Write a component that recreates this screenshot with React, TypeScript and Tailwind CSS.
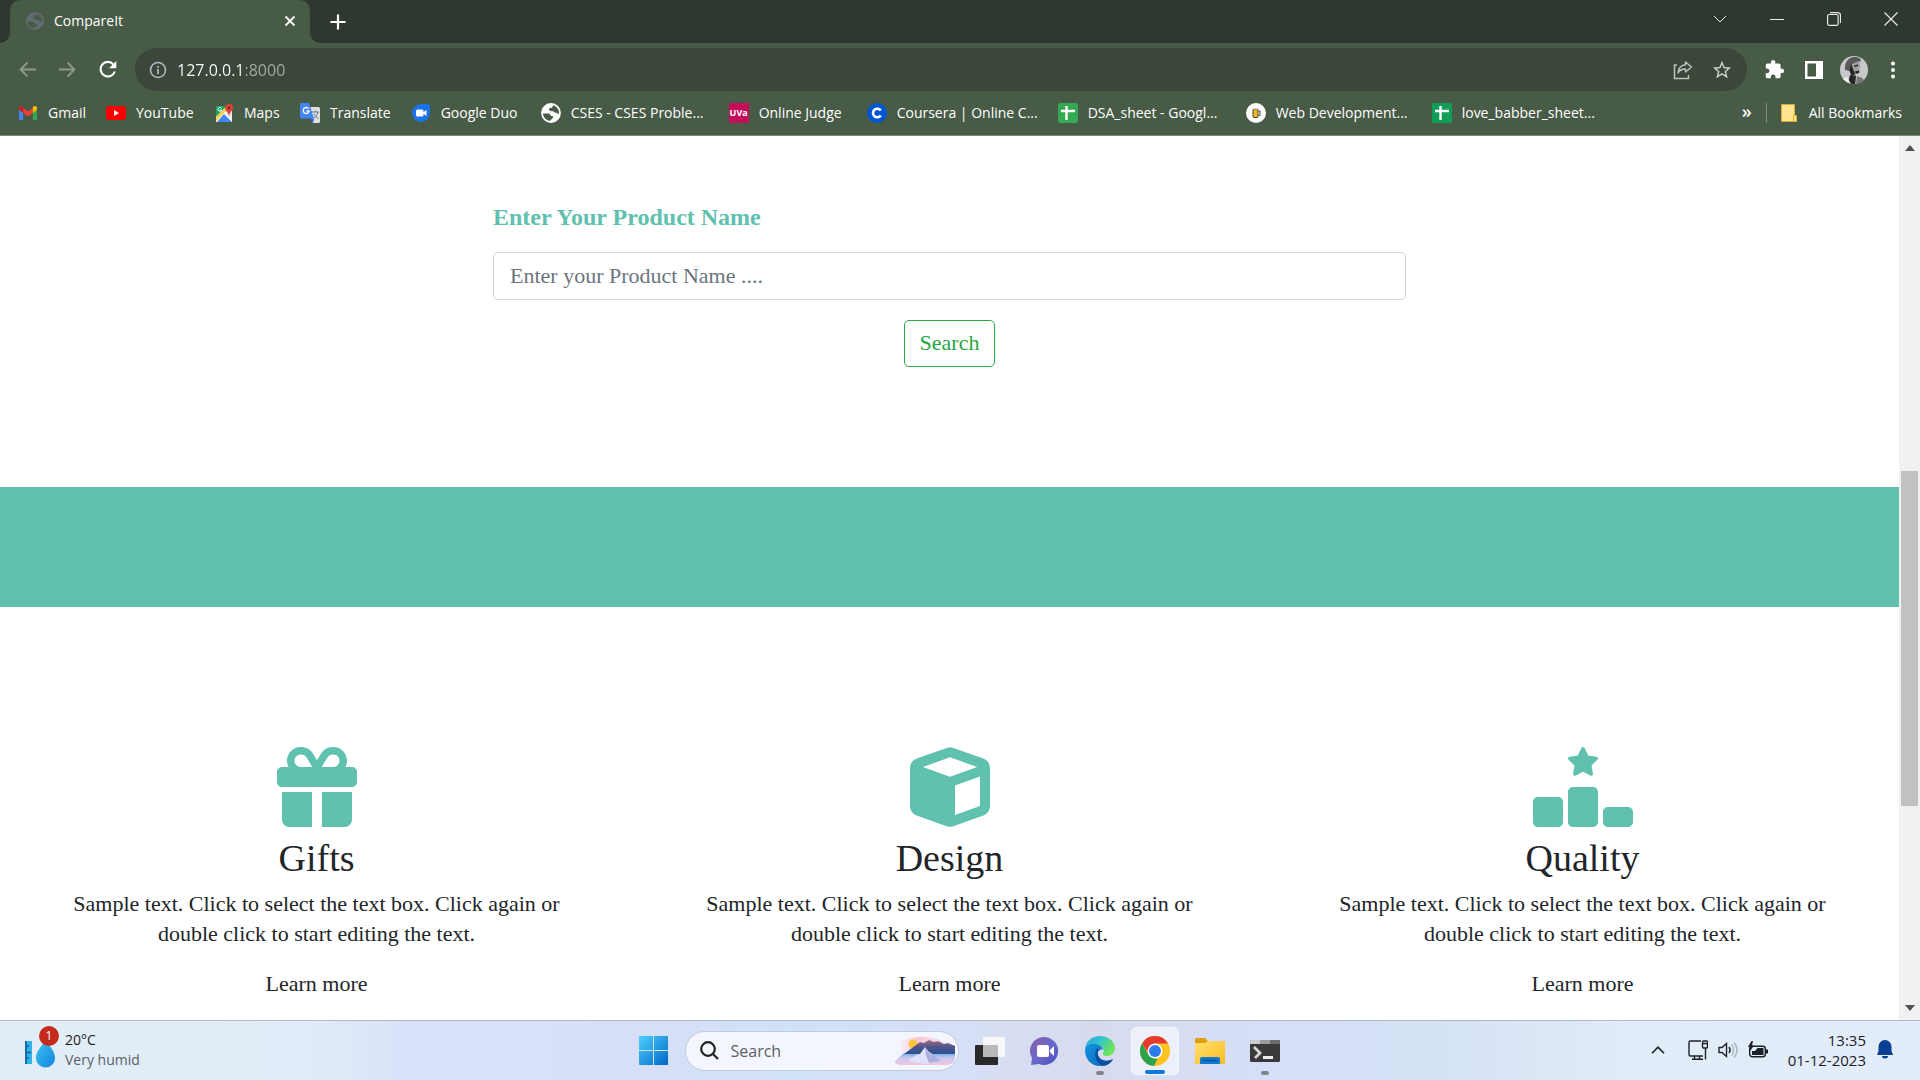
import type { ReactNode } from "react";
import { FaCube, FaGift, FaRankingStar } from "react-icons/fa6";
import { MdExtension, MdStarBorder } from "react-icons/md";

const GlobeIcon = ({ className }: { className: string }) => (
  <svg viewBox="0 0 20 20" className={className}>
    <circle cx="10" cy="10" r="9" fill="none" stroke="currentColor" strokeWidth="1.8" />
    <path fill="currentColor" d="M13 1.500C6 0 1 5 1.500 10.500h6c2 0 1.500 2.500 3.500 2.500 1.500 0 1.500 1.800.3 2.500L8 18.800c5 .9 10.500-2 11-8.300-1.500.5-3 .3-3.500-1-1 .5-2 .3-2.500-.8-1-.9-3-.2-4.500-1.200-1.200-1.500 0-2.500 1.500-2.700 2-.3 1-1.300 3-3.300z" />
  </svg>
);

const SheetsIcon = ({ className }: { className: string }) => (
  <svg viewBox="0 0 20 20" className={className}>
    <rect width="20" height="20" rx="2" fill="currentColor" />
    <path d="M8.500 3v14M3 8h14" stroke="#fff" strokeWidth="2.400" />
  </svg>
);

const GmailIcon = () => (
  <svg viewBox="0 0 20 20" className="size-5">
    <path fill="#4285f4" d="M1 6.500l4.200 3V17H2.200A1.200 1.200 0 0 1 1 15.800z" />
    <path fill="#34a853" d="M19 6.500l-4.200 3V17h3a1.200 1.200 0 0 0 1.200-1.200z" />
    <path fill="#ea4335" d="M5.200 5L10 8.600 14.800 5v5L10 13.600 5.200 10z" />
    <path fill="#c5221f" d="M1 5c0-2 2-2.600 3.400-1.600l.8.600v6L1 6.800z" />
    <path fill="#fbbc04" d="M19 5c0-2-2-2.600-3.400-1.600l-.8.600v6L19 6.800z" />
  </svg>
);

const YouTubeIcon = () => (
  <svg viewBox="0 0 20 20" className="size-5">
    <rect y="3" width="20" height="14" rx="3.500" fill="#f00" />
    <path fill="#fff" d="M8 7l5 3-5 3z" />
  </svg>
);

const MapsIcon = () => (
  <svg viewBox="0 0 20 20" className="size-5">
    <path fill="#1fa463" d="M2 3h12L2 17z" />
    <path fill="#fff" d="M2 14L13 3l5 4v12H2z" />
    <path fill="#ffd04b" d="M2 14L12 4l2 2L2 18.500z" />
    <path fill="#4285f4" d="M10 11l8 8H3z" />
    <path fill="#e8eaed" d="M11 10l7-1v8z" />
    <path d="M7.500 5.300a1.900 1.900 0 1 0 .2 1.700H6" fill="none" stroke="#fff" />
    <path fill="#db4437" d="M15 1a4 4 0 0 0-4 4c0 3 3.500 4 4 8.500C15.500 9 19 8 19 5a4 4 0 0 0-4-4z" />
    <circle cx="15" cy="5" r="1.400" fill="#7b2a22" />
  </svg>
);

const TranslateIcon = () => (
  <svg viewBox="0 0 20 20" className="size-5">
    <path fill="#e0e0e0" d="M8 4h10.500A1.500 1.500 0 0 1 20 5.500V18.500a1.500 1.500 0 0 1-1.500 1.500H13z" />
    <path d="M12 9h7M15.500 7.500V9M18 9c-.5 3-2.500 5-4.500 6M14 11c1 2 2.500 3.500 4.500 4.500" stroke="#607d8b" fill="none" />
    <path fill="#4285f4" d="M1.500 0H9l5 15.500H1.500A1.500 1.500 0 0 1 0 14V1.500A1.500 1.500 0 0 1 1.500 0z" />
    <path fill="#3367d6" d="M9.500 15.500H14L13 20z" />
    <path d="M8.500 5.500a3 3 0 1 0 .7 2.500H6.500" fill="none" stroke="#fff" strokeWidth="1.300" />
  </svg>
);

const DuoIcon = () => (
  <svg viewBox="0 0 20 20" className="size-5">
    <path fill="#1a73e8" d="M10 1h7a2 2 0 0 1 2 2v7a9 9 0 1 1-9-9z" />
    <rect x="5" y="6.500" width="7.500" height="7" rx="1.500" fill="#fff" />
    <path fill="#fff" d="M12 9.500l3.500-2.500v6L12 10.500z" />
  </svg>
);

const UvaIcon = () => (
  <span className="flex size-5 items-center justify-center bg-[#c40d5b] text-[9px] font-bold">UVa</span>
);

const CourseraIcon = () => (
  <svg viewBox="0 0 20 20" className="size-5">
    <circle cx="10" cy="10" r="10" fill="#0056d2" />
    <path d="M13.800 7.500a4.300 4.300 0 1 0 0 5" stroke="#fff" strokeWidth="2.600" fill="none" />
  </svg>
);

const MugIcon = () => (
  <svg viewBox="0 0 20 20" className="size-5">
    <circle cx="10" cy="10" r="10" fill="#fff" />
    <rect x="7" y="6" width="5" height="8.500" rx="1" fill="#f0b81a" stroke="#444" />
    <path d="M12.500 8h1.500v4.500h-1.500" fill="none" stroke="#444" />
    <path d="M6.500 5.500h6" stroke="#ddd" strokeWidth="1.500" />
  </svg>
);

const bookmarks: { label: string; width: string; icon: ReactNode }[] = [
  { label: "Gmail", width: "min-w-[67px]", icon: <GmailIcon /> },
  { label: "YouTube", width: "min-w-[88px]", icon: <YouTubeIcon /> },
  { label: "Maps", width: "min-w-[66px]", icon: <MapsIcon /> },
  { label: "Translate", width: "min-w-[88px]", icon: <TranslateIcon /> },
  { label: "Google Duo", width: "min-w-[110px]", icon: <DuoIcon /> },
  { label: "CSES - CSES Proble...", width: "min-w-[168px]", icon: <GlobeIcon className="size-5 text-white" /> },
  { label: "Online Judge", width: "min-w-[118px]", icon: <UvaIcon /> },
  { label: "Coursera | Online C...", width: "min-w-[168px]", icon: <CourseraIcon /> },
  { label: "DSA_sheet - Googl...", width: "min-w-[168px]", icon: <SheetsIcon className="size-5 text-[#34a853]" /> },
  { label: "Web Development...", width: "min-w-[166px]", icon: <MugIcon /> },
  { label: "love_babber_sheet...", width: "min-w-[166px]", icon: <SheetsIcon className="size-5 text-[#0f9d58]" /> },
];

function TabStrip() {
  return (
    <div className="flex h-[43px] items-stretch bg-[#2f382e] pl-2.5">
      <div className="relative flex w-[300px] items-center rounded-t-[10px] bg-[#485b46] pr-3.5 pb-0.5 pl-4">
        <svg viewBox="0 0 10 10" className="absolute bottom-0 -left-2.5 size-2.5 text-[#485b46]">
          <path fill="currentColor" d="M10 0v10H0A10 10 0 0 0 10 0z" />
        </svg>
        <svg viewBox="0 0 10 10" className="absolute -right-2.5 bottom-0 size-2.5 text-[#485b46]">
          <path fill="currentColor" d="M0 0v10h10A10 10 0 0 1 0 0z" />
        </svg>
        <GlobeIcon className="size-[18px] text-[#636a70]" />
        <span className="ml-2.5 grow text-sm text-white">CompareIt</span>
        <button aria-label="Close tab" className="text-white">
          <svg viewBox="0 0 12 12" className="size-3" stroke="currentColor" strokeWidth="1.800"><path d="M1.500 1.500l9 9M10.500 1.500l-9 9" /></svg>
        </button>
      </div>
      <button aria-label="New tab" className="ml-5 text-white">
        <svg viewBox="0 0 16 16" className="size-4" stroke="currentColor" strokeWidth="2.200"><path d="M8 .5v15M.5 8h15" /></svg>
      </button>
      <div className="ml-auto flex items-center pb-1.5 text-[#e8ebe7]">
        <button aria-label="Search tabs" className="flex w-14 justify-center">
          <svg viewBox="0 0 14 14" className="size-3.5" fill="none" stroke="currentColor"><path d="M1 4l6 6 6-6" /></svg>
        </button>
        <button aria-label="Minimize" className="flex w-[57px] justify-center">
          <svg viewBox="0 0 14 14" className="size-3.5" stroke="currentColor"><path d="M0 7.500h14" /></svg>
        </button>
        <button aria-label="Restore" className="flex w-[57px] justify-center">
          <svg viewBox="0 0 14 14" className="size-3.5" fill="none" stroke="currentColor" strokeWidth="1.200"><rect x=".6" y="2.500" width="10.500" height="10.800" rx="1.500" /><path d="M3 .6h7.500a3 3 0 0 1 3 3V11" /></svg>
        </button>
        <button aria-label="Close" className="flex w-[58px] justify-center">
          <svg viewBox="0 0 14 14" className="size-3.5" stroke="currentColor" strokeWidth="1.200"><path d="M.5.5l13 13M13.500.5l-13 13" /></svg>
        </button>
      </div>
    </div>
  );
}

function Toolbar() {
  return (
    <div className="flex items-center bg-[#485b46] pt-[5px] pr-6 pl-[18px]">
      <button aria-label="Back" className="text-[#8d998c]">
        <svg viewBox="0 0 20 20" className="size-5" fill="none" stroke="currentColor" strokeWidth="1.800"><path d="M18 9.500H3M9.500 2.500l-7 7 7 7" /></svg>
      </button>
      <button aria-label="Forward" className="ml-5 text-[#8d998c]">
        <svg viewBox="0 0 20 20" className="size-5" fill="none" stroke="currentColor" strokeWidth="1.800"><path d="M1 9.500h15M9.500 2.500l7 7-7 7" /></svg>
      </button>
      <button aria-label="Reload" className="ml-5 text-white">
        <svg viewBox="0 0 20 20" className="size-5" fill="none" stroke="currentColor" strokeWidth="2.100"><path d="M15.500 4.500A7.300 7.300 0 1 0 16.800 11.500" /><path d="M18.300 1v7.200H11z" fill="currentColor" stroke="none" /></svg>
      </button>
      <div className="ml-[17px] flex h-[43px] grow items-center rounded-full bg-[#3b473a] px-3.5">
        <svg viewBox="0 0 18 18" className="size-[18px] text-[#b3b9bd]" fill="none" stroke="currentColor" strokeWidth="1.600"><circle cx="9" cy="9" r="7.500" /><path d="M9 8v5M9 5v1.800" strokeWidth="1.800" /></svg>
        <input
          aria-label="Address"
          type="text"
          defaultValue="127.0.0.1:8000"
          className="ml-2.5 grow bg-[linear-gradient(90deg,#fff_68px,#a5ada4_68px)] bg-clip-text text-base text-transparent caret-white outline-none"
        />
        <button aria-label="Share" className="text-[#bcc2bb]">
          <svg viewBox="0 0 20 20" className="size-5" fill="none" stroke="currentColor" strokeWidth="1.500"><path d="M4 5H1.500v13.500h14V15" /><path d="M12.500 2l6 5-6 5V9C9 9 6.500 10 5 13c.3-5 3.500-8 7.500-8.300z" strokeLinejoin="round" /></svg>
        </button>
        <button aria-label="Bookmark this tab" className="ml-[18px] text-[#cdd1cc]"><MdStarBorder className="size-[22px]" /></button>
      </div>
      <button aria-label="Extensions" className="ml-[17px] text-white"><MdExtension className="size-[21px]" /></button>
      <button aria-label="Side panel" className="ml-5 text-white">
        <svg viewBox="0 0 18 18" className="size-[18px]"><path fill="currentColor" fillRule="evenodd" d="M0 0h18v18H0zM2.500 2.500v13H11v-13z" /></svg>
      </button>
      <button aria-label="Profile" className="ml-[17px]">
        <svg viewBox="0 0 28 28" className="size-7 rounded-full">
          <rect width="28" height="28" fill="#c9c9cb" />
          <path fill="#59595a" d="M5 14C4 6 9 0 16 1c3 .3 5 2 5 4l-8 3-3 7z" />
          <path fill="#a0a0a0" d="M12 8l7-3 1.500 6.500-1.500 1 .5 3-3.500 2v9l-6-1 1-8z" />
          <path fill="#262627" d="M14 9.500l4-1v1.500l-3.500 1zM11 8l2.500 6 2 4-4 2-2-5zM15 15.500l4-1 .5 2-3 1.500zM10 19l6 1-1 8H8z" />
          <path fill="#eee" d="M0 24l7-3 4 7H2z" /><path fill="#777" d="M17 20l5 2 3 3-6 3h-3z" />
        </svg>
      </button>
      <button aria-label="Menu" className="ml-[22px] text-white">
        <svg viewBox="0 0 6 18" className="h-[18px] w-1.5" fill="currentColor"><circle cx="3" cy="2.500" r="2" /><circle cx="3" cy="9" r="2" /><circle cx="3" cy="15.500" r="2" /></svg>
      </button>
    </div>
  );
}

function BookmarksBar() {
  return (
    <nav aria-label="Bookmarks" className="flex h-[45px] items-center border-b border-[#7d897c] bg-[#485b46] px-[18px] text-sm whitespace-nowrap text-white">
      <div className="flex grow items-center gap-5">
        {bookmarks.map((b) => (
          <a key={b.label} href="#" className={`flex items-center gap-2.5 ${b.width}`}>
            {b.icon}
            {b.label}
          </a>
        ))}
      </div>
      <button aria-label="More bookmarks" className="pb-1 text-lg font-semibold">»</button>
      <span className="mx-3.5 h-5 w-px bg-[#7d897c]" />
      <a href="#" className="flex items-center gap-3">
        <svg viewBox="0 0 16 18" className="h-[18px] w-4"><path fill="#ffe38f" stroke="#dcae30" d="M.5.5h13v11h2v6H.5z" /><path d="M12.500 17.500v-6h2" stroke="#dcae30" fill="none" /></svg>
        All Bookmarks
      </a>
    </nav>
  );
}

function SearchForm() {
  return (
    <form className="mx-auto w-[913px] max-w-full pt-[66px] text-[22px]/[30px]" onSubmit={(e) => e.preventDefault()}>
      <label htmlFor="product" className="block text-2xl/[30px] font-bold text-[#60c1af]">Enter Your Product Name</label>
      <input
        id="product"
        type="text"
        placeholder="Enter your Product Name ...."
        className="mt-5 block h-12 w-full rounded-[5px] border border-[#ced4da] px-4 placeholder:text-[#6c757d] placeholder:opacity-100"
      />
      <button className="mx-auto mt-5 block h-[47px] rounded-[5px] border border-[#28a745] px-[15px] pb-0.5 text-[#28a745]">Search</button>
    </form>
  );
}

const features = [
  { title: "Gifts", icon: <FaGift className="size-20" /> },
  { title: "Design", icon: <FaCube className="size-20" /> },
  { title: "Quality", icon: <FaRankingStar className="h-20 w-[100px]" /> },
];

function Features() {
  return (
    <section className="grid grid-cols-3 pt-[140px]">
      {features.map((f) => (
        <article key={f.title} className="flex flex-col items-center px-[70px] text-center text-[22px]/[30px] text-[#212529]">
          <div className="text-[#60c1af]">{f.icon}</div>
          <h3 className="mt-2.5 text-[38px]/[42px]">{f.title}</h3>
          <p className="mt-2.5">Sample text. Click to select the text box. Click again or double click to start editing the text.</p>
          <a href="#" className="mt-5">Learn more</a>
        </article>
      ))}
    </section>
  );
}

function Scrollbar() {
  return (
    <div className="flex w-[21px] shrink-0 flex-col items-center bg-[#f1f1f1]">
      <svg viewBox="0 0 10 6" className="mt-[9px] h-1.5 w-2.5"><path fill="#505050" d="M5 0l5 6H0z" /></svg>
      <div className="h-80" />
      <div className="h-[335px] w-[17px] bg-[#c1c1c1]" />
      <svg viewBox="0 0 10 6" className="mt-auto mb-[9px] h-1.5 w-2.5"><path fill="#505050" d="M0 0h10L5 6z" /></svg>
    </div>
  );
}

function TaskButton({ label, active, mark, children }: { label: string; active?: boolean; mark?: boolean; children: ReactNode }) {
  return (
    <button
      aria-label={label}
      className={active ? "relative flex size-12 items-center justify-center rounded-md border border-white/60 bg-[#ecf0fa]" : "relative flex size-12 items-center justify-center"}
    >
      {children}
      {active && <span className="absolute bottom-0 h-1 w-5 rounded-full bg-[#0a7bdc]" />}
      {mark && <span className="absolute bottom-0 h-1 w-2 rounded-full bg-[#81858f]" />}
    </button>
  );
}

function Taskbar() {
  return (
    <footer className="flex h-[60px] items-center border-t border-[#b0b9c4] bg-[linear-gradient(90deg,#e1edf7_0%,#e1ecf8_16%,#d8e3fa_21%,#d6dff6_34%,#d0e2f8_41%,#d6dff6_50%,#d8dbee_57%,#d5dff7_66%,#d5e2f5_75%,#e0ecf8_85%,#e2edf9_100%)]">
      <div className="flex flex-1 items-center pb-0.5 pl-[25px]">
        <button aria-label="Weather" className="relative flex items-center gap-2 text-left">
          <svg viewBox="0 0 32 38" className="h-[38px] w-8">
            <defs>
              <linearGradient id="drop" x1="0" y1="0" x2="1" y2="1"><stop stopColor="#3cc5f1" /><stop offset="1" stopColor="#1483dc" /></linearGradient>
            </defs>
            <rect y="10" width="7" height="23" fill="#31b4ea" />
            <path d="M1 10v23M1 15h3M1 21.500h5M1 27h3" stroke="#135d9c" strokeWidth="1.600" />
            <path fill="url(#drop)" d="M20.500 9c3 5 9.500 11 9.500 18a9.500 9.500 0 0 1-19 0c0-7 6-12 9.500-18z" />
          </svg>
          <span className="absolute -top-1 left-3.5 flex size-5 items-center justify-center rounded-full bg-[#c42b1c] text-xs text-white">1</span>
          <span className="text-sm/5 text-[#1b1e22]">20°C<br /><span className="text-[#5b6168]">Very humid</span></span>
        </button>
      </div>

      <div className="flex items-center gap-[7px]">
        <TaskButton label="Start">
          <svg viewBox="0 0 29 29" className="size-[29px]">
            <defs><linearGradient id="win" x1="0" y1="0" x2="1" y2="1"><stop stopColor="#4cd0fc" /><stop offset="1" stopColor="#0067c8" /></linearGradient></defs>
            <path fill="url(#win)" d="M1 0h13v14H0V1a1 1 0 0 1 1-1zM15 0h13a1 1 0 0 1 1 1v13H15zM0 15h14v14H1a1 1 0 0 1-1-1zM15 15h14v13a1 1 0 0 1-1 1H15z" />
          </svg>
        </TaskButton>
        <label className="relative flex h-10 w-[274px] items-center overflow-hidden rounded-full border border-[#c3cbdc] bg-[#f3f6fd] pl-3.5">
          <svg viewBox="0 0 19 19" className="size-[19px] shrink-0 text-[#222]" fill="none" stroke="currentColor" strokeWidth="2.200"><circle cx="8" cy="8" r="6.800" /><path d="M13 13l5 5" /></svg>
          <input aria-label="Search Windows" type="text" placeholder="Search" className="ml-3 w-24 grow bg-transparent text-base placeholder:text-[#5b6068] placeholder:opacity-100" />
          <svg viewBox="0 0 62 32" className="mr-0.5 h-8 w-[62px] shrink-0">
            <defs>
              <linearGradient id="sky" x1="0" y1="0" x2="1" y2="0"><stop stopColor="#fbd0e0" stopOpacity="0" /><stop offset=".35" stopColor="#fcc5d6" /><stop offset="1" stopColor="#f6d5ea" stopOpacity=".3" /></linearGradient>
              <linearGradient id="ridge" x1="0" y1="0" x2="0" y2="1"><stop stopColor="#a06f86" /><stop offset=".5" stopColor="#4f5489" /><stop offset="1" stopColor="#2b5292" /></linearGradient>
              <linearGradient id="lake" x1="0" y1="0" x2="0" y2="1"><stop stopColor="#6ea5dc" /><stop offset=".4" stopColor="#c7c9f0" /><stop offset="1" stopColor="#f3c5e0" /></linearGradient>
            </defs>
            <path fill="url(#sky)" d="M4 12c4-12 28-12 42-7l14 6v6H8z" />
            <circle cx="19" cy="9" r="4.500" fill="#ffc53a" />
            <path fill="url(#lake)" d="M10 18h51v4c0 6-4 8-10 8H8c-5 0-8-2-7-4z" />
            <path fill="url(#ridge)" d="M10 19l8-6 8-6 4 1 5-3 5 2 4-1 6 3 4-1 7 3v8z" />
            <path fill="#dfe3fa" d="M14 26l8-6 4-1 5-7 4 5 5 3 7 6-16 3z" />
            <path fill="#8b8fcf" d="M31 12l4 6 5 2 7 6-12 2-3-8z" opacity=".6" />
          </svg>
        </label>
        <TaskButton label="Task view">
          <svg viewBox="0 0 30 30" className="size-[30px]">
            <rect y="9" width="23" height="20" rx="1" fill="#292929" />
            <rect x="8" y="1" width="22" height="20" rx="1" fill="#f8f8f8" />
            <rect x="8" y="9" width="15" height="12" fill="#b9b9b9" />
          </svg>
        </TaskButton>
        <TaskButton label="Chat">
          <svg viewBox="0 0 30 30" className="size-[30px]">
            <defs><linearGradient id="chat" x1="0" y1="0" x2="1" y2="1"><stop stopColor="#8b5fa5" /><stop offset=".5" stopColor="#6a68cb" /><stop offset="1" stopColor="#4a50bd" /></linearGradient></defs>
            <path fill="url(#chat)" d="M15 1a14 14 0 1 1-6 27L1 29l1-7A14 14 0 0 1 15 1z" />
            <rect x="7" y="9" width="12" height="12" rx="2" fill="#fff" />
            <path fill="#fff" d="M20 14l4-4v10l-4-4z" />
          </svg>
        </TaskButton>
        <TaskButton label="Edge" mark>
          <svg viewBox="0 0 30 30" className="size-[30px]">
            <defs>
              <linearGradient id="edgeTop" x1="0" y1="0" x2="1" y2=".5"><stop stopColor="#26a5e4" /><stop offset=".5" stopColor="#33c5cf" /><stop offset="1" stopColor="#6ee554" /></linearGradient>
              <linearGradient id="edgeBody" x1="0" y1="0" x2="1" y2="1"><stop stopColor="#1594e0" /><stop offset="1" stopColor="#0b63b8" /></linearGradient>
            </defs>
            <path fill="url(#edgeTop)" d="M0 13C1 5 7 0 15 0c9 0 15 6 15 12 0 5-4 8-8 8-3 0-5-1-4-3 2-3 0-7-5-8C7 8 2 10 0 13z" />
            <path fill="url(#edgeBody)" d="M0 14C1 9 6 7 11 8c5 1 7 4 7 6-2-1-4 0-5 2-1 5 3 9 8 9 3 0 5-1 7-2-3 5-8 7-13 7C6 30 0 23 0 14z" />
            <path fill="#0c51a0" d="M12 12c-4 7-1 15 6 18 5-.5 8-3 10-7-6 3-13 2-15-4-.7-3 0-5 2-5-1-1-2-2-3-2z" />
          </svg>
        </TaskButton>
        <TaskButton label="Chrome" active>
          <svg viewBox="0 0 30 30" className="size-[30px]">
            <circle cx="15" cy="15" r="15" fill="#fcc31e" />
            <path fill="#e33b2e" d="M2 7.500a15 15 0 0 1 26 0H15L9 18z" />
            <path fill="#2ba24c" d="M2 7.500L8.500 18.800 15 22.500h2.500L14 30A15 15 0 0 1 2 7.500z" />
            <circle cx="15" cy="15" r="7.500" fill="#fff" />
            <circle cx="15" cy="15" r="6" fill="#2f7bea" />
          </svg>
        </TaskButton>
        <TaskButton label="File Explorer">
          <svg viewBox="0 0 30 28" className="h-7 w-[30px]">
            <defs><linearGradient id="folder" x1="0" y1="0" x2="1" y2="1"><stop stopColor="#ffdf6b" /><stop offset="1" stopColor="#fbbc25" /></linearGradient></defs>
            <path fill="#df9c0b" d="M1 1h9l3 3h16v8H0V2z" />
            <path fill="url(#folder)" d="M0 6h10l3-2h17v23H0z" />
            <path fill="#1279cc" d="M5 27v-5a2 2 0 0 1 2-2h16a2 2 0 0 1 2 2v5z" />
            <path d="M8 23.500h14" stroke="#0b4f94" strokeWidth="1.500" />
          </svg>
        </TaskButton>
        <TaskButton label="Terminal" mark>
          <svg viewBox="0 0 30 22" className="h-[22px] w-[30px]">
            <rect width="30" height="22" rx="1.500" fill="#3a3a3a" />
            <path fill="#ccc" d="M1 0h9v4H0V1z" /><path fill="#9b9b9b" d="M10 0h10v4H10z" /><path fill="#6d6d6d" d="M20 0h9l1 1v3H20z" />
            <path d="M4 7l6 6-5 5" stroke="#d7d7d7" strokeWidth="2.800" fill="none" />
            <path d="M13 17.500h10" stroke="#eee" strokeWidth="3" />
          </svg>
        </TaskButton>
      </div>

      <div className="flex flex-1 items-center justify-end pr-[27px] pb-0.5 text-[#1d2126]">
        <button aria-label="Show hidden icons">
          <svg viewBox="0 0 14 8" className="h-2 w-3.5" fill="none" stroke="currentColor" strokeWidth="1.600"><path d="M1 7.200L7 1.200l6 6" /></svg>
        </button>
        <button aria-label="Quick settings" className="ml-[23px] flex items-center gap-2.5">
          <svg viewBox="0 0 20 20" className="size-5" fill="none" stroke="currentColor" strokeWidth="1.400"><path d="M13 1H2.500A1.500 1.500 0 0 0 1 2.500v12A1.500 1.500 0 0 0 2.500 16H15M6.500 16v3M11.500 16v3M4 19.300h11M17.500 8v11.500" /><rect x="14.500" y="1" width="5" height="7" rx="1" /><path d="M15 3.500h4" /></svg>
          <svg viewBox="0 0 20 18" className="h-[18px] w-5" fill="none" stroke="currentColor" strokeWidth="1.400"><path d="M1 6.500v5h3l4.500 4v-13l-4.500 4zM11 6c1.300 1.800 1.300 4.200 0 6" /><path stroke="#aab3bd" d="M13.500 3.500c2.500 3.500 2.500 7.500 0 11M16 1.500c4 4.500 4 10.500 0 15" /></svg>
          <svg viewBox="0 0 20 18" className="h-[18px] w-5"><rect x="1.700" y="5.200" width="15.600" height="10.600" rx="2.500" fill="none" stroke="currentColor" strokeWidth="1.400" /><path fill="currentColor" d="M4 14V10h3l2.500-3H15.500v7zM18 8.500h2v4h-2zM3.500 0L0 6h2v4l4-5.500H4L5 0z" /></svg>
        </button>
        <button aria-label="Clock" className="ml-5 text-right text-[15px]/5">13:35<br />01-12-2023</button>
        <button aria-label="Notifications" className="ml-[11px] text-[#0a3f94]">
          <svg viewBox="0 0 16 19" className="h-[19px] w-4" fill="currentColor"><path d="M8 0a6.500 6.500 0 0 1 6.500 6.500V11l1.500 4H0l1.500-4V6.500A6.500 6.500 0 0 1 8 0zM5 16h6a3 2.500 0 0 1-6 0z" /></svg>
        </button>
      </div>
    </footer>
  );
}

export default function App() {
  return (
    <div className="flex min-h-screen flex-col bg-white font-['Open_Sans','Noto_Sans',sans-serif]">
      <header>
        <TabStrip />
        <Toolbar />
        <BookmarksBar />
      </header>
      <div className="flex grow">
        <main className="min-w-0 grow font-[Georgia,'Liberation_Serif',serif]">
          <SearchForm />
          <div className="mt-[120px] h-[120px] bg-[#60c1af]" />
          <Features />
        </main>
        <Scrollbar />
      </div>
      <Taskbar />
    </div>
  );
}
